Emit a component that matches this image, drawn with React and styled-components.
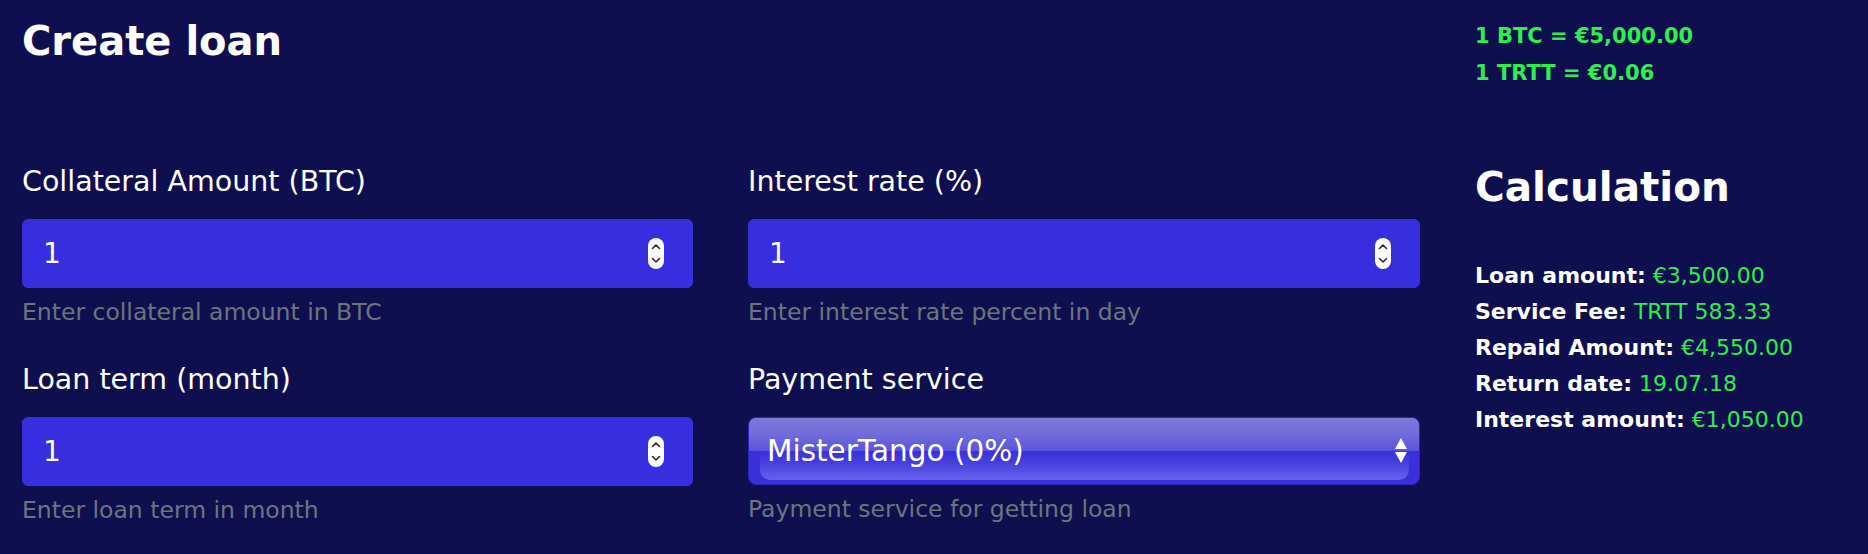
import React from "react";
import styled, { createGlobalStyle } from "styled-components";

const GlobalStyle = createGlobalStyle`
  html, body {
    margin: 0;
    padding: 0;
    background: #0f0f50;
  }
  body {
    font-family: "DejaVu Sans", "Liberation Sans", sans-serif;
    color: #ffffff;
  }
  * { box-sizing: border-box; }
`;

const Page = styled.div`
  display: grid;
  grid-template-columns: 1398px 1fr;
  column-gap: 55px;
  padding: 17px 22px 0 22px;
  min-height: 554px;
  background: #0f0f50;
`;

const Main = styled.section`
  display: flex;
  flex-direction: column;
`;

const Heading = styled.h1`
  margin: 0;
  font-family: "DejaVu Sans", sans-serif;
  font-weight: 700;
  font-size: 40px;
  line-height: 48px;
  color: #ffffff;
  letter-spacing: 0;
`;

const FormGrid = styled.div`
  display: grid;
  grid-template-columns: 671px 672px;
  column-gap: 55px;
  row-gap: 37px;
  margin-top: 100px;
`;

const Field = styled.div`
  display: flex;
  flex-direction: column;
`;

const Label = styled.label`
  font-size: 28.5px;
  line-height: 34px;
  font-weight: 400;
  color: #ffffff;
  margin-bottom: 20px;
`;

const Help = styled.small`
  display: block;
  margin-top: 10px;
  font-size: 23.5px;
  line-height: 28px;
  color: #6c757d;
`;

const NumberBox = styled.div`
  display: flex;
  align-items: center;
  height: 69px;
  padding: 0 28px 0 20px;
  background: #372ee0;
  border: 1px solid #3a32d8;
  border-radius: 6px;
`;

const ValueInput = styled.input`
  flex: 1;
  min-width: 0;
  background: transparent;
  border: 0;
  outline: none;
  padding: 0;
  font-family: "DejaVu Sans", sans-serif;
  font-size: 28px;
  color: #ffffff;
`;

const Spinner = styled.span`
  display: flex;
  width: 16px;
  height: 31px;
  border-radius: 8px;
  background: #ffffff;
  flex: none;
`;

const SelectBox = styled.div`
  position: relative;
  display: flex;
  align-items: center;
  height: 68px;
  padding: 0 12px 0 18px;
  border: 1px solid #2d24c4;
  border-radius: 8px;
  overflow: hidden;
  background: linear-gradient(
    180deg,
    #7f7ad9 0%,
    #6d67db 30%,
    #5b53dd 49.5%,
    #3a2fd8 50%,
    #3a2fd8 100%
  );

  &::before {
    content: "";
    position: absolute;
    left: 11px;
    right: 10px;
    top: 50%;
    bottom: 4px;
    border-radius: 0 0 10px 10px;
    background: linear-gradient(180deg, #3a2fd8 0%, #4841e0 45%, #6763ec 100%);
  }
`;

const SelectText = styled.span`
  position: relative;
  flex: 1;
  font-size: 29.5px;
  color: #ffffff;
  white-space: nowrap;
`;

const SelectArrows = styled.span`
  position: relative;
  display: flex;
  width: 12px;
  height: 26px;
  flex: none;
`;

const Aside = styled.aside`
  display: flex;
  flex-direction: column;
  padding-top: 1px;
`;

const Rate = styled.div`
  font-size: 21px;
  line-height: 37px;
  font-weight: 700;
  color: #2cf04e;
  white-space: nowrap;
`;

const CalcHeading = styled(Heading)`
  margin-top: 71px;
  font-size: 40.5px;
`;

const CalcList = styled.div`
  margin-top: 47px;
  display: flex;
  flex-direction: column;
`;

const CalcRow = styled.div`
  font-size: 22px;
  line-height: 36px;
  white-space: nowrap;
`;

const CalcKey = styled.span`
  font-weight: 700;
  color: #ffffff;
`;

const CalcValue = styled.span`
  font-weight: 400;
  color: #2cf04e;
`;

function SpinIcon() {
  return (
    <Spinner>
      <svg width="16" height="31" viewBox="0 0 16 31">
        <path d="M4.5 10.5 L8 7 L11.5 10.5" fill="none" stroke="#2a2a2a" strokeWidth="1.6" strokeLinecap="round" strokeLinejoin="round" />
        <path d="M4.5 20.5 L8 24 L11.5 20.5" fill="none" stroke="#2a2a2a" strokeWidth="1.6" strokeLinecap="round" strokeLinejoin="round" />
      </svg>
    </Spinner>
  );
}

function NumberField({ label, help, value }) {
  return (
    <Field>
      <Label>{label}</Label>
      <NumberBox>
        <ValueInput type="text" defaultValue={value} />
        <SpinIcon />
      </NumberBox>
      <Help>{help}</Help>
    </Field>
  );
}

function SelectField({ label, help, value }) {
  return (
    <Field>
      <Label>{label}</Label>
      <SelectBox>
        <SelectText>{value}</SelectText>
        <SelectArrows>
          <svg width="12" height="26" viewBox="0 0 12 26">
            <path d="M6 0 L12 11 L0 11 Z" fill="#ffffff" />
            <path d="M0 14 L12 14 L6 25 Z" fill="#ffffff" />
          </svg>
        </SelectArrows>
      </SelectBox>
      <Help>{help}</Help>
    </Field>
  );
}

const calc = [
  ["Loan amount:", "€3,500.00"],
  ["Service Fee:", "TRTT 583.33"],
  ["Repaid Amount:", "€4,550.00"],
  ["Return date:", "19.07.18"],
  ["Interest amount:", "€1,050.00"],
];

export default function App() {
  return (
    <>
      <GlobalStyle />
      <Page>
        <Main>
          <Heading>Create loan</Heading>
          <FormGrid>
            <NumberField label="Collateral Amount (BTC)" help="Enter collateral amount in BTC" value="1" />
            <NumberField label="Interest rate (%)" help="Enter interest rate percent in day" value="1" />
            <NumberField label="Loan term (month)" help="Enter loan term in month" value="1" />
            <SelectField label="Payment service" help="Payment service for getting loan" value="MisterTango (0%)" />
          </FormGrid>
        </Main>
        <Aside>
          <Rate>1 BTC = €5,000.00</Rate>
          <Rate>1 TRTT = €0.06</Rate>
          <CalcHeading>Calculation</CalcHeading>
          <CalcList>
            {calc.map(([k, v]) => (
              <CalcRow key={k}>
                <CalcKey>{k}</CalcKey> <CalcValue>{v}</CalcValue>
              </CalcRow>
            ))}
          </CalcList>
        </Aside>
      </Page>
    </>
  );
}
